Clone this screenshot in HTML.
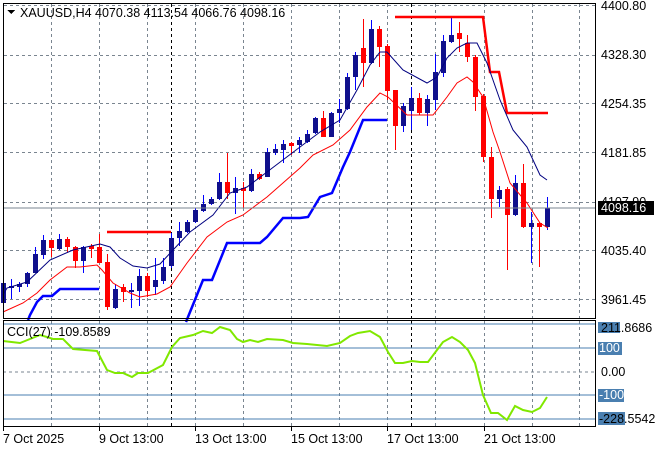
<!DOCTYPE html>
<html><head><meta charset="utf-8"><style>
html,body{margin:0;padding:0;background:#fff;width:660px;height:450px;overflow:hidden}
svg{display:block}
text{font-family:"Liberation Sans","DejaVu Sans",sans-serif;font-size:12.5px;fill:#000}
</style></head><body>
<svg id="s" width="660" height="450" xmlns="http://www.w3.org/2000/svg" shape-rendering="crispEdges">
<g id="grid" stroke="#7a8590" stroke-dasharray="3,3" stroke-width="1"></g>
<g id="cands"></g>
<polyline fill="none" stroke="#0000ff" stroke-width="2.5" shape-rendering="auto" points="28,320 30,315 37,302 43,296 52,296 60,289 99,289"/>
<polyline fill="none" stroke="#0000ff" stroke-width="2.5" shape-rendering="auto" points="186,322 188,317 203,280 212,280 227,243 260,243 267,237 283,218 300,218 308,217 320,197 332,193 343,167 350,152 363,120 387,120"/>
<polyline fill="none" stroke="#ff0000" stroke-width="2.5" shape-rendering="auto" points="107,232 171,232"/>
<polyline fill="none" stroke="#ff0000" stroke-width="2.5" shape-rendering="auto" points="395,17 483,17 490,72 499,72 507,113 548,113"/>
<polyline fill="none" stroke="#000080" stroke-width="1" shape-rendering="auto" points="3,295 7,288 27,282 50,260 73,250 100,244 110,247 120,258 133,266 147,268 160,264 173,250 190,232 213,215 230,193 247,187 267,172 300,147 320,132 340,120 357,90 370,65 380,52 387,52 403,70 427,83 437,77 447,58 457,48 467,43 477,43 487,63 500,100 513,130 527,147 540,175 547,180"/>
<polyline fill="none" stroke="#ff0000" stroke-width="1" shape-rendering="auto" points="3,312 23,303 37,293 50,280 67,267 80,267 97,265 102,270 113,283 130,293 140,297 157,294 170,287 187,263 207,237 227,222 243,215 267,197 300,168 313,155 333,145 350,130 367,107 380,93 388,97 407,115 433,115 447,97 457,83 467,77 473,82 483,97 493,132 500,152 510,183 527,203 540,223 548,228"/>
<line x1="3" y1="208" x2="596" y2="208" stroke="#7a8590"/>
<g stroke="#4a7fb0" stroke-width="1">
<line x1="3" y1="324" x2="596" y2="324"/><line x1="3" y1="348" x2="596" y2="348"/>
<line x1="3" y1="395" x2="596" y2="395"/><line x1="3" y1="419" x2="596" y2="419"/>
</g>
<line x1="3" y1="372" x2="596" y2="372" stroke="#7a8590" stroke-dasharray="3,3"/>
<polyline fill="none" stroke="#80e800" stroke-width="2" shape-rendering="auto" points="3,341 20,343 30,339 40,335 47,337 53,339 63,339 73,349 97,351 107,370 115,373 123,373 132,377 138,373 148,373 163,365 172,347 180,338 193,335 203,331 212,333 220,327 230,330 237,339 243,342 250,340 258,342 267,339 283,340 293,343 307,344 327,346 340,343 350,336 358,333 370,331 380,337 388,352 395,363 403,363 412,361 420,362 428,362 437,350 443,342 452,337 460,342 468,350 475,363 483,395 491,413 498,413 507,420 515,406 523,410 532,412 540,408 547,397"/>
<rect x="3.5" y="3.5" width="592" height="315" fill="none" stroke="#000"/>
<rect x="3.5" y="320.5" width="592" height="106" fill="none" stroke="#000"/>
<g id="ticks" stroke="#000"></g>
<polygon points="7,10 15,10 11,14" fill="#000"/>
<text x="20" y="17">XAUUSD,H4  4070.38 4113.54 4066.76 4098.16</text>
<text x="7" y="336">CCI(27) -109.8589</text>
<g>
<text x="601" y="10">4400.80</text>
<text x="601" y="59">4328.30</text>
<text x="601" y="108">4254.35</text>
<text x="601" y="157">4181.85</text>
<text x="601" y="206">4107.90</text>
<rect x="598" y="201" width="56" height="14" fill="#000"/>
<text x="601" y="212" style="fill:#fff">4098.16</text>
<text x="601" y="255">4035.40</text>
<text x="601" y="304">3961.45</text>
</g>
<g>
<rect x="598" y="322" width="22" height="11" fill="#4a7fb0"/>
<text x="601" y="332">211.8686</text>
<rect x="598" y="342" width="24" height="13" fill="#4a7fb0"/>
<text x="599" y="352" style="fill:#fff">100</text>
<text x="601" y="376">0.00</text>
<rect x="598" y="389" width="26" height="13" fill="#4a7fb0"/>
<text x="599" y="399" style="fill:#fff">-100</text>
<rect x="598" y="412" width="27" height="13" fill="#4a7fb0"/>
<text x="599" y="423">-228.5542</text>
</g>
<g>
<text x="3" y="443">7 Oct 2025</text>
<text x="99" y="443">9 Oct 13:00</text>
<text x="195" y="443">13 Oct 13:00</text>
<text x="291" y="443">15 Oct 13:00</text>
<text x="387" y="443">17 Oct 13:00</text>
<text x="484" y="443">21 Oct 13:00</text>
</g>
</svg>
<script>
var NS="http://www.w3.org/2000/svg";
function el(p,t,a){var e=document.createElementNS(NS,t);for(var k in a)e.setAttribute(k,a[k]);p.appendChild(e);return e;}
var g=document.getElementById('grid');
[51,99,147,195,243,291,339,387,435,484,532,579].forEach(function(x){
 el(g,'line',{x1:x+.5,y1:4,x2:x+.5,y2:318});
 el(g,'line',{x1:x+.5,y1:321,x2:x+.5,y2:426});
});
[5,55,103,152,202,250,299].forEach(function(y){el(g,'line',{x1:4,y1:y+.5,x2:596,y2:y+.5});});
[171,411].forEach(function(x){
 el(g,'line',{x1:x+.5,y1:4,x2:x+.5,y2:318,stroke:'#000'});
 el(g,'line',{x1:x+.5,y1:321,x2:x+.5,y2:426,stroke:'#000'});
});
var t=document.getElementById('ticks');
[3,99,195,291,387,484].forEach(function(x){el(t,'line',{x1:x+.5,y1:427,x2:x+.5,y2:431});});
var C=[
[280,283,303,306,1],[279,286,288,299,1],[282,284,287,292,1],[272,273,284,287,1],[247,254,273,273,1],
[235,240,255,259,1],[240,240,248,257,0],[234,239,249,250,1],[237,239,247,252,0],[246,247,261,268,0],
[246,247,261,273,1],[244,246,249,258,0],[234,247,263,263,0],[254,262,307,310,0],[284,289,308,309,1],
[284,287,292,302,0],[283,290,292,308,1],[269,276,291,306,1],[273,276,291,297,0],[258,280,287,295,1],
[258,267,281,284,1],[233,238,266,268,1],[222,231,238,246,1],[220,222,232,233,1],[208,210,222,223,1],
[195,204,211,212,1],[197,199,204,205,1],[173,182,199,200,1],[153,182,193,199,0],[177,188,193,214,1],
[182,188,191,208,0],[169,174,191,192,1],[172,174,179,180,0],[148,152,177,177,1],[144,149,153,155,1],
[140,144,150,163,1],[142,143,146,155,0],[137,140,145,153,1],[130,134,142,143,1],[117,118,133,134,1],
[111,118,137,137,0],[112,113,137,137,1],[99,109,113,123,1],[73,77,109,110,1],[52,55,77,90,1],
[19,48,63,87,0],[20,29,63,64,1],[26,29,47,67,0],[44,46,91,100,0],[90,90,126,150,0],
[103,106,126,132,1],[87,98,111,130,1],[93,98,113,115,0],[95,99,113,126,1],[54,72,100,110,1],
[35,41,73,77,1],[18,35,42,43,1],[22,33,39,52,0],[35,43,57,62,0],[55,57,97,111,0],
[94,96,157,162,0],[147,157,199,218,0],[186,190,199,207,1],[187,189,215,270,0],[175,183,215,216,1],
[164,183,227,228,0],[212,223,227,263,1],[222,223,227,267,0],[197,208,227,230,1]];
var cg=document.getElementById('cands');
C.forEach(function(c,i){
 var x=3+8*i, bull=c[4];
 el(cg,'rect',{x:x,y:c[0],width:1,height:Math.max(1,c[3]-c[0]),fill:bull?'#0000ff':'#ff0000'});
 el(cg,'rect',{x:x-2,y:c[1],width:5,height:Math.max(1,c[2]-c[1]),fill:bull?'#10108c':'#ff0000'});
});
</script>
</body></html>
